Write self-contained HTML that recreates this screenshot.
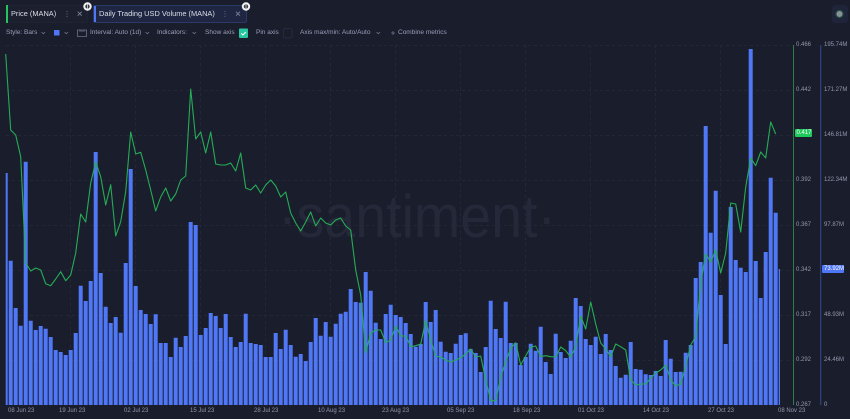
<!DOCTYPE html>
<html>
<head>
<meta charset="utf-8">
<style>
html,body{margin:0;padding:0;background:#1a1d2c;}
body{width:850px;height:419px;overflow:hidden;position:relative;font-family:"Liberation Sans",sans-serif;}
.t{position:absolute;white-space:nowrap;font-size:6.5px;line-height:10px;color:#9a9fb8;}
.c{position:absolute;left:0;top:0;}
.chip{position:absolute;box-sizing:border-box;height:18px;top:5px;border-radius:2px;}
.l{font-size:7.4px;color:#dcdfe9;top:9px;}
.ax{font-size:6px;color:#9398ab;}
.dt{font-size:6px;color:#9398ab;top:406px;}
</style>
</head>
<body>
<div class="chip" style="left:6px;width:82px;background:#1c1f2e;border:1px solid #1f2336;"></div>
<div class="chip" style="left:93px;width:154px;background:#1e2641;border:1px solid #2a3966;"></div>
<div style="position:absolute;left:6px;top:5px;width:2px;height:18px;background:#22c55e;"></div>
<div style="position:absolute;left:94px;top:6px;width:2px;height:16px;background:#4f76f5;"></div>
<div class="t l" style="left:11px;">Price (MANA)</div>
<div class="t l" style="left:99px;">Daily Trading USD Volume (MANA)</div>

<svg class="c" width="850" height="419" viewBox="0 0 850 419">
<g fill="#5a6078"><circle cx="67" cy="11.5" r=".6"/><circle cx="67" cy="14" r=".6"/><circle cx="67" cy="16.5" r=".6"/><circle cx="225" cy="11.5" r=".6"/><circle cx="225" cy="14" r=".6"/><circle cx="225" cy="16.5" r=".6"/></g>
<g stroke="#80869c" stroke-width=".8" fill="none"><path d="M77.7 11.7l4 4M81.7 11.7l-4 4M236 11.7l4 4M240 11.7l-4 4"/></g>
<circle cx="87.5" cy="6.5" r="4.2" fill="#f2f2f2"/><circle cx="87.5" cy="6.5" r="2.2" fill="#33363f"/><path d="M87.5 3.6v5.8" stroke="#f2f2f2" stroke-width=".7"/>
<circle cx="246" cy="6.5" r="4.2" fill="#f2f2f2"/><circle cx="246" cy="6.5" r="2.2" fill="#33363f"/><path d="M246 3.6v5.8" stroke="#f2f2f2" stroke-width=".7"/>

<g stroke="#6c7289" stroke-width=".8" fill="none">
<path d="M41.5 32l1.8 1.8 1.8-1.8M64.5 32l1.8 1.8 1.8-1.8M145.5 32l1.8 1.8 1.8-1.8M192.5 32l1.8 1.8 1.8-1.8M376.5 32l1.8 1.8 1.8-1.8"/>
<path d="M77.5 30h9v6.5h-9z"/><path d="M80 30v2M82 30v2M84 30v2"/>
<path d="M391 33h4M393 31v4"/>
</g>
<rect x="54" y="30" width="5.5" height="5.5" fill="#4f76f5"/>
<rect x="239" y="28.5" width="9" height="9.5" rx="1" fill="#26c6a0"/>
<path d="M241.3 33.4l1.6 1.6 3-3" stroke="#fff" stroke-width="1" fill="none"/>
<rect x="283.5" y="28.5" width="8.5" height="9.5" rx="1.5" fill="none" stroke="#262a3b"/>

<g stroke="#232736" stroke-width="1" stroke-dasharray="3 3" fill="none">
<path d="M6 45.5H793M6 90.5H793M6 135.5H793M6 180.5H793M6 225.5H793M6 270.5H793M6 315.5H793M6 360.5H793"/>
<path d="M70.5 45V405M135.5 45V405M200.5 45V405M265.5 45V405M330.5 45V405M395.5 45V405M460.5 45V405M525.5 45V405M590.5 45V405M655.5 45V405M720.5 45V405"/>
</g>

<text x="278" y="237" font-family="Liberation Sans" font-size="60" textLength="278" lengthAdjust="spacingAndGlyphs" fill="#242838">·santiment·</text>

<clipPath id="cp"><rect x="5.7" y="40" width="774.3" height="365"/></clipPath>
<path clip-path="url(#cp)" stroke="#5078f6" stroke-width="4" fill="none" d="M5.7 405V173M10.7 405V260.7M15.7 405V308M20.7 405V325.7M25.7 405V161.7M30.7 405V320.7M35.7 405V330M40.7 405V326M45.7 405V328.7M50.7 405V337M55.7 405V350M60.7 405V352M65.7 405V355M70.7 405V350M75.7 405V333M80.7 405V285.7M85.7 405V301M90.7 405V281M95.7 405V152M100.7 405V273M105.7 405V306.7M110.7 405V323M115.7 405V317M120.7 405V332.7M125.7 405V263M130.7 405V169M135.7 405V286M140.7 405V310M145.7 405V314M150.7 405V324M155.7 405V314.3M160.7 405V343M165.7 405V343M170.7 405V357M175.7 405V337.7M180.7 405V347M185.7 405V336M190.7 405V222M195.7 405V225M200.7 405V335M205.7 405V328M210.7 405V313M215.7 405V316M220.7 405V328M225.7 405V314M230.7 405V337M235.7 405V347M240.7 405V342M245.7 405V313.7M250.7 405V343M255.7 405V344M260.7 405V345M265.7 405V357M270.7 405V357M275.7 405V333M280.7 405V349M285.7 405V329.7M290.7 405V345M295.7 405V356.7M300.7 405V354M305.7 405V361M310.7 405V342M315.7 405V318M320.7 405V335.7M325.7 405V322M330.7 405V336.7M335.7 405V323.7M340.7 405V313.7M345.7 405V311.7M350.7 405V289M355.7 405V302M360.7 405V302.7M365.7 405V272M370.7 405V290.7M375.7 405V322.7M380.7 405V339M385.7 405V314M390.7 405V304.7M395.7 405V315M400.7 405V317M405.7 405V323M410.7 405V334M415.7 405V346.7M420.7 405V344M425.7 405V302M430.7 405V322M435.7 405V310M440.7 405V341.7M445.7 405V351.7M450.7 405V353M455.7 405V343.7M460.7 405V335M465.7 405V333.3M470.7 405V349M475.7 405V353M480.7 405V372M485.7 405V347M490.7 405V300.7M495.7 405V329M500.7 405V338M505.7 405V301.7M510.7 405V343M515.7 405V343M520.7 405V365M525.7 405V357M530.7 405V343.7M535.7 405V350.7M540.7 405V326.7M545.7 405V362M550.7 405V374M555.7 405V333.7M560.7 405V352M565.7 405V358M570.7 405V340.7M575.7 405V298M580.7 405V306M585.7 405V339M590.7 405V345M595.7 405V336.7M600.7 405V354M605.7 405V334M610.7 405V350M615.7 405V366M620.7 405V377.7M625.7 405V374.7M630.7 405V342M635.7 405V369M640.7 405V369.7M645.7 405V374.3M650.7 405V375M655.7 405V371M660.7 405V376M665.7 405V340M670.7 405V358.7M675.7 405V372M680.7 405V371.7M685.7 405V352.7M690.7 405V345M695.7 405V278M700.7 405V262M705.7 405V126M710.7 405V232.7M715.7 405V190.7M720.7 405V295M725.7 405V344M730.7 405V207M735.7 405V260M740.7 405V267.7M745.7 405V272M750.7 405V49M755.7 405V261M760.7 405V298M765.7 405V252M770.7 405V177.7M775.7 405V212.7M780.7 405V269"/>

<polyline fill="none" stroke="#24ad56" stroke-width="1.1" stroke-linejoin="round" points="5.7,54 10.7,130 15.7,135 20.7,156.7 25.7,263 30.7,271 35.7,268 40.7,270 45.7,283.7 50.7,285.7 55.7,279 60.7,271.7 65.7,280.7 70.7,275 75.7,253 80.7,214 85.7,222 90.7,183 95.7,162 100.7,176.7 105.7,205 110.7,184.7 115.7,236 120.7,221.7 125.7,191.7 130.7,132 135.7,154 140.7,152.3 145.7,170 150.7,190 155.7,211 160.7,197 165.7,188 170.7,201 175.7,194 180.7,180 185.7,176 190.7,89 195.7,139 200.7,132 205.7,153 210.7,132 215.7,164 220.7,165 225.7,165 230.7,163 235.7,171 240.7,153 245.7,188 250.7,190 255.7,185 260.7,193 265.7,185 270.7,180 275.7,186 280.7,197 285.7,192 290.7,213 295.7,223 300.7,231 305.7,222 310.7,212 315.7,226 320.7,218 325.7,223 330.7,225 335.7,220 340.7,218 345.7,226 350.7,230 355.7,270 360.7,295 365.7,352.7 370.7,333 375.7,330 380.7,330 385.7,342.7 390.7,340 395.7,326 400.7,336 405.7,336 410.7,346.7 415.7,345.7 420.7,344 425.7,320.7 430.7,340 435.7,356 440.7,357 445.7,360 450.7,362 455.7,360 460.7,357.7 465.7,354 470.7,349 475.7,357 480.7,356 485.7,380 490.7,400.7 495.7,400.7 500.7,376.7 505.7,361.7 510.7,348 515.7,342.7 520.7,365 525.7,356 530.7,347 535.7,346 540.7,356.7 545.7,355.7 550.7,356.7 555.7,357 560.7,347 565.7,350.7 570.7,357 575.7,346.7 580.7,316 585.7,329 590.7,302 595.7,324 600.7,343 605.7,349 610.7,356.7 615.7,344 620.7,346.7 625.7,350 630.7,380 635.7,385 640.7,384 645.7,384 650.7,378 655.7,373 660.7,370 665.7,365 670.7,380 675.7,386 680.7,384 685.7,366 690.7,345 695.7,336.7 700.7,283 705.7,254 710.7,262 715.7,250 720.7,273 725.7,253 730.7,203 735.7,204 740.7,232 745.7,187 750.7,158 755.7,165.7 760.7,152 765.7,158 770.7,122 775.7,134"/>

<path d="M793.5 45V405" stroke="#2c7d47" stroke-width="1"/>
<path d="M820.7 45V405" stroke="#2f4a94" stroke-width="1"/>

<rect x="832" y="5" width="16" height="18" rx="3" fill="#20243a"/>
<circle cx="839.5" cy="14" r="3.6" fill="#8a8f9c" stroke="#1f4f3c" stroke-width="1.2"/>

<rect x="795" y="129" width="17" height="8" rx="1" fill="#1fc95c"/>
<rect x="822" y="265" width="22" height="8" rx="1" fill="#4f76f5"/>
</svg>

<div class="t" style="left:6px;top:28px;">Style: Bars</div>
<div class="t" style="left:90px;top:28px;">Interval: Auto (1d)</div>
<div class="t" style="left:157px;top:28px;">Indicators:</div>
<div class="t" style="left:205px;top:28px;">Show axis</div>
<div class="t" style="left:256px;top:28px;">Pin axis</div>
<div class="t" style="left:300px;top:28px;">Axis max/min: Auto/Auto</div>
<div class="t" style="left:398px;top:28px;">Combine metrics</div>

<div class="t ax" style="left:796px;top:40px;">0.466</div>
<div class="t ax" style="left:796px;top:85px;">0.442</div>
<div class="t ax" style="left:796px;top:175px;">0.392</div>
<div class="t ax" style="left:796px;top:220px;">0.367</div>
<div class="t ax" style="left:796px;top:265px;">0.342</div>
<div class="t ax" style="left:796px;top:310px;">0.317</div>
<div class="t ax" style="left:796px;top:355px;">0.292</div>
<div class="t ax" style="left:796px;top:400px;">0.267</div>
<div class="t ax" style="left:796.5px;top:128px;color:#fff;">0.417</div>

<div class="t ax" style="left:824px;top:40px;">195.74M</div>
<div class="t ax" style="left:824px;top:85px;">171.27M</div>
<div class="t ax" style="left:824px;top:130px;">146.81M</div>
<div class="t ax" style="left:824px;top:175px;">122.34M</div>
<div class="t ax" style="left:824px;top:220px;">97.87M</div>
<div class="t ax" style="left:824px;top:264px;color:#fff;">73.92M</div>
<div class="t ax" style="left:824px;top:310px;">48.93M</div>
<div class="t ax" style="left:824px;top:355px;">24.46M</div>
<div class="t ax" style="left:824px;top:400px;">0</div>

<div class="t dt" style="left:8px;">08 Jun 23</div>
<div class="t dt" style="left:59px;">19 Jun 23</div>
<div class="t dt" style="left:124px;">02 Jul 23</div>
<div class="t dt" style="left:190px;">15 Jul 23</div>
<div class="t dt" style="left:254px;">28 Jul 23</div>
<div class="t dt" style="left:318px;">10 Aug 23</div>
<div class="t dt" style="left:382px;">23 Aug 23</div>
<div class="t dt" style="left:447px;">05 Sep 23</div>
<div class="t dt" style="left:513px;">18 Sep 23</div>
<div class="t dt" style="left:578px;">01 Oct 23</div>
<div class="t dt" style="left:643px;">14 Oct 23</div>
<div class="t dt" style="left:708px;">27 Oct 23</div>
<div class="t dt" style="left:778px;">08 Nov 23</div>
</body>
</html>
